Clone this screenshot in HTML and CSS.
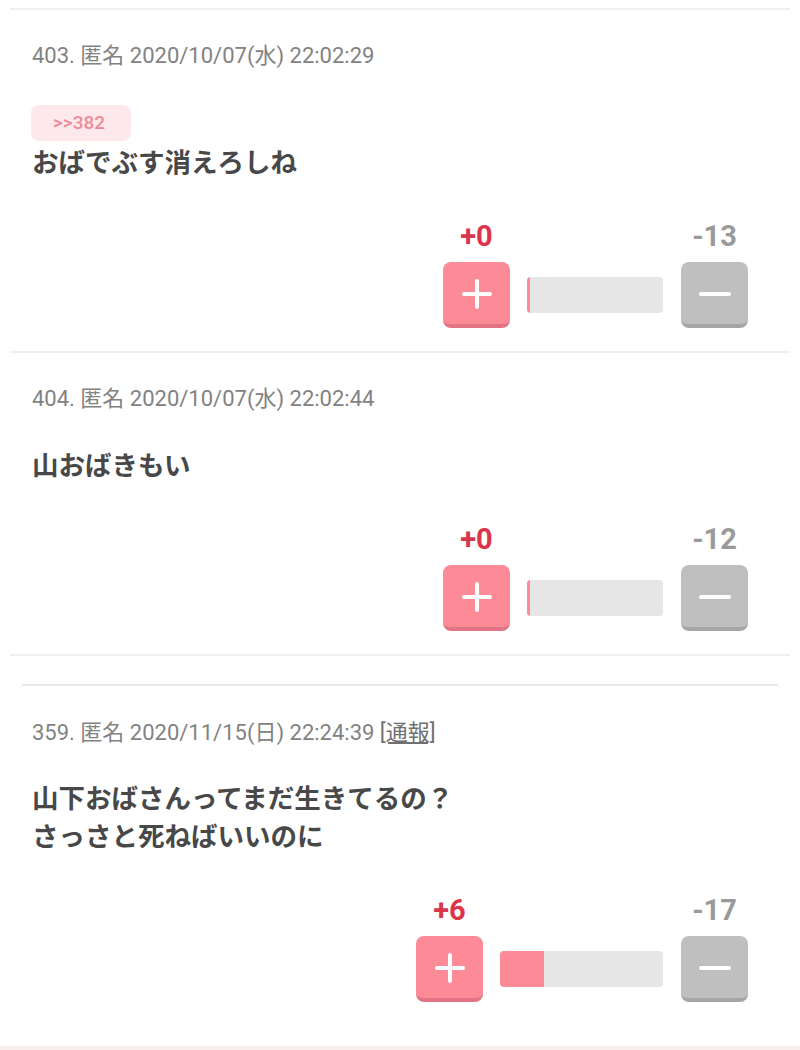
FILE: index.html
```html
<!DOCTYPE html>
<html lang="ja">
<head>
  <meta charset="UTF-8" />
  <meta name="viewport" content="width=device-width, initial-scale=1" />
  <title>コメント</title>
  <link rel="stylesheet" href="styles.css">
</head>
<body>

  <div class="thread">
    <article class="post">
      <p class="meta">403. 匿名 2020/10/07(水) 22:02:29</p>
      <a class="anchor">&gt;&gt;382</a>
      <p class="text">おばでぶす消えろしね</p>
      <div class="vote">
        <div class="vote-col">
          <span class="vote-count good">+0</span>
          <button class="vote-btn good" aria-label="plus">
            <svg width="32" height="32" viewBox="0 0 32 32"><path d="M16 3v26M3 16h26" stroke="#fff" stroke-width="4" stroke-linecap="round"/></svg>
          </button>
        </div>
        <div class="vote-bar"><div class="vote-fill" style="width:0%"></div></div>
        <div class="vote-col">
          <span class="vote-count bad">-13</span>
          <button class="vote-btn bad" aria-label="minus">
            <svg width="32" height="32" viewBox="0 0 32 32"><path d="M2 16h28" stroke="#fff" stroke-width="4" stroke-linecap="round"/></svg>
          </button>
        </div>
      </div>
    </article>

    <article class="post">
      <p class="meta">404. 匿名 2020/10/07(水) 22:02:44</p>
      <p class="text">山おばきもい</p>
      <div class="vote">
        <div class="vote-col">
          <span class="vote-count good">+0</span>
          <button class="vote-btn good" aria-label="plus">
            <svg width="32" height="32" viewBox="0 0 32 32"><path d="M16 3v26M3 16h26" stroke="#fff" stroke-width="4" stroke-linecap="round"/></svg>
          </button>
        </div>
        <div class="vote-bar"><div class="vote-fill" style="width:0%"></div></div>
        <div class="vote-col">
          <span class="vote-count bad">-12</span>
          <button class="vote-btn bad" aria-label="minus">
            <svg width="32" height="32" viewBox="0 0 32 32"><path d="M2 16h28" stroke="#fff" stroke-width="4" stroke-linecap="round"/></svg>
          </button>
        </div>
      </div>
    </article>
  </div>

  <div class="thread thread-alt">
    <article class="post">
      <p class="meta">359. 匿名 2020/11/15(日) 22:24:39 <a class="report">[通報]</a></p>
      <p class="text">山下おばさんってまだ生きてるの？<br>さっさと死ねばいいのに</p>
      <div class="vote">
        <div class="vote-col">
          <span class="vote-count good">+6</span>
          <button class="vote-btn good" aria-label="plus">
            <svg width="32" height="32" viewBox="0 0 32 32"><path d="M16 3v26M3 16h26" stroke="#fff" stroke-width="4" stroke-linecap="round"/></svg>
          </button>
        </div>
        <div class="vote-bar"><div class="vote-fill" style="width:27%"></div></div>
        <div class="vote-col">
          <span class="vote-count bad">-17</span>
          <button class="vote-btn bad" aria-label="minus">
            <svg width="32" height="32" viewBox="0 0 32 32"><path d="M2 16h28" stroke="#fff" stroke-width="4" stroke-linecap="round"/></svg>
          </button>
        </div>
      </div>
    </article>
  </div>

  <div class="bottom-strip"></div>

</body>
</html>
```

FILE: styles.css
```css
body {
  margin: 0;
  background: #fff;
  font-family: Roboto, "Noto Sans CJK JP", sans-serif;
  color: #444;
}
p {
  margin: 0;
}
.thread {
  margin: 8px 10px 0;
  border-top: 2px solid #efefef;
}
.post {
  padding: 33px 42px 23px 22px;
  border-bottom: 2px solid #efefef;
}
.thread-alt {
  margin: 28px 22px 0;
  border-top: 2px solid #e8e8e8;
}
.thread-alt .post {
  padding: 34px 30px 44px 10px;
  border-bottom: none;
}
.meta {
  font-size: 22px;
  line-height: 26px;
  color: #828282;
  margin-bottom: 36px;
}
.thread-alt .meta {
  margin-bottom: 34px;
}
.report {
  color: #707070;
  text-decoration: underline;
}
.anchor {
  display: block;
  width: 100px;
  height: 36px;
  line-height: 36px;
  margin-bottom: 4px;
  margin-left: -1px;
  padding-right: 4px;
  box-sizing: border-box;
  text-align: center;
  background: #fde8eb;
  border-radius: 8px;
  color: #ee8b98;
  font-size: 19px;
  font-weight: 500;
}
.text {
  font-size: 26.5px;
  line-height: 36px;
  font-weight: bold;
  color: #484848;
}
.thread-alt .text {
  line-height: 38px;
}
.vote {
  display: flex;
  justify-content: flex-end;
  align-items: flex-end;
  gap: 17px;
  margin-top: 40px;
}
.thread-alt .vote {
  margin-top: 39px;
}
.vote-col {
  display: flex;
  flex-direction: column;
  align-items: center;
  width: 67px;
}
.vote-count {
  font-size: 29px;
  line-height: 30px;
  font-weight: bold;
  margin-bottom: 11px;
}
.vote-count.good {
  color: #d9364c;
}
.vote-count.bad {
  color: #9a9a9a;
}
.vote-btn {
  width: 67px;
  height: 66px;
  padding: 0;
  border: none;
  border-radius: 8px;
  display: flex;
  align-items: center;
  justify-content: center;
  cursor: pointer;
}
.vote-btn.good {
  background: #fd8a97;
  border-bottom: 4px solid #e27485;
}
.vote-btn.bad {
  background: #bfbfbf;
  border-bottom: 4px solid #a6a6a6;
}
.vote-btn svg {
  margin-top: 2px;
}
.vote-bar {
  width: 136px;
  height: 36px;
  margin: 0 1px 15px 0;
  background: #e6e6e6;
  border-radius: 4px;
  overflow: hidden;
}
.thread-alt .vote-bar {
  width: 163px;
}
.vote-fill {
  height: 100%;
  min-width: 3px;
  background: #fd8a97;
}
.bottom-strip {
  height: 6px;
  background: #f8efed;
}
```
